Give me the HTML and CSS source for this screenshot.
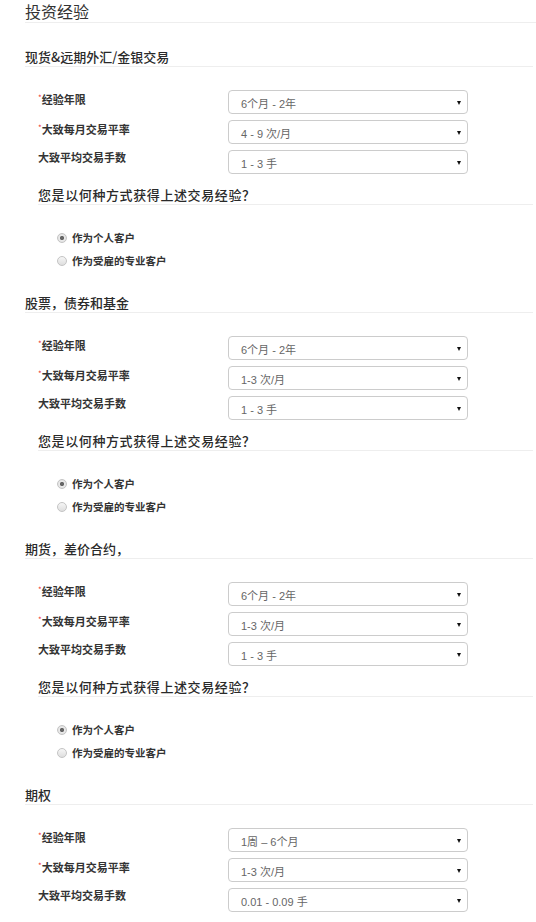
FILE: index.html
```html
<!DOCTYPE html>
<html lang="zh-CN">
<head>
<meta charset="utf-8">
<title>投资经验</title>
<link rel="stylesheet" href="styles.css">
</head>
<body>
<div class="page">
  <h2 class="title">投资经验</h2>

  <section class="group">
    <h3 class="group-title">现货&amp;远期外汇/金银交易</h3>
    <div class="fields">
      <div class="field"><span class="field-label"><span class="req">*</span>经验年限</span><div class="select"><span>6个月 - 2年</span><i class="caret"></i></div></div>
      <div class="field"><span class="field-label"><span class="req">*</span>大致每月交易平率</span><div class="select"><span>4 - 9 次/月</span><i class="caret"></i></div></div>
      <div class="field"><span class="field-label">大致平均交易手数</span><div class="select"><span>1 - 3 手</span><i class="caret"></i></div></div>
    </div>
    <h4 class="question">您是以何种方式获得上述交易经验？</h4>
    <div class="radios">
      <label class="radio"><input type="radio" name="g1" checked><span>作为个人客户</span></label>
      <label class="radio"><input type="radio" name="g1"><span>作为受雇的专业客户</span></label>
    </div>
  </section>

  <section class="group">
    <h3 class="group-title">股票，债券和基金</h3>
    <div class="fields">
      <div class="field"><span class="field-label"><span class="req">*</span>经验年限</span><div class="select"><span>6个月 - 2年</span><i class="caret"></i></div></div>
      <div class="field"><span class="field-label"><span class="req">*</span>大致每月交易平率</span><div class="select"><span>1-3 次/月</span><i class="caret"></i></div></div>
      <div class="field"><span class="field-label">大致平均交易手数</span><div class="select"><span>1 - 3 手</span><i class="caret"></i></div></div>
    </div>
    <h4 class="question">您是以何种方式获得上述交易经验？</h4>
    <div class="radios">
      <label class="radio"><input type="radio" name="g2" checked><span>作为个人客户</span></label>
      <label class="radio"><input type="radio" name="g2"><span>作为受雇的专业客户</span></label>
    </div>
  </section>

  <section class="group">
    <h3 class="group-title">期货，差价合约，</h3>
    <div class="fields">
      <div class="field"><span class="field-label"><span class="req">*</span>经验年限</span><div class="select"><span>6个月 - 2年</span><i class="caret"></i></div></div>
      <div class="field"><span class="field-label"><span class="req">*</span>大致每月交易平率</span><div class="select"><span>1-3 次/月</span><i class="caret"></i></div></div>
      <div class="field"><span class="field-label">大致平均交易手数</span><div class="select"><span>1 - 3 手</span><i class="caret"></i></div></div>
    </div>
    <h4 class="question">您是以何种方式获得上述交易经验？</h4>
    <div class="radios">
      <label class="radio"><input type="radio" name="g3" checked><span>作为个人客户</span></label>
      <label class="radio"><input type="radio" name="g3"><span>作为受雇的专业客户</span></label>
    </div>
  </section>

  <section class="group">
    <h3 class="group-title">期权</h3>
    <div class="fields">
      <div class="field"><span class="field-label"><span class="req">*</span>经验年限</span><div class="select"><span>1周 – 6个月</span><i class="caret"></i></div></div>
      <div class="field"><span class="field-label"><span class="req">*</span>大致每月交易平率</span><div class="select"><span>1-3 次/月</span><i class="caret"></i></div></div>
      <div class="field"><span class="field-label">大致平均交易手数</span><div class="select"><span>0.01 - 0.09 手</span><i class="caret"></i></div></div>
    </div>
  </section>
</div>
</body>
</html>
```

FILE: styles.css
```css
html, body {
  margin: 0;
  padding: 0;
  background: #fff;
}
body {
  font-family: "Noto Sans CJK SC", "Liberation Sans", sans-serif;
  color: #333;
  overflow: hidden;
}
.page {
  padding-left: 25px;
}
.title {
  margin: 0;
  padding-top: 1px;
  font-size: 16px;
  line-height: 21px;
  font-weight: normal;
  border-bottom: 1px solid #eee;
}
.group {
  margin-right: 3px;
  margin-top: 25px;
}
.group + .group {
  margin-top: 22px;
}
.group-title {
  margin: 0;
  font-size: 13px;
  line-height: 18px;
  font-weight: 500;
  color: #2a2a2a;
  border-bottom: 1px solid #eee;
}
.fields {
  margin-top: 23px;
  padding-left: 13px;
  display: flex;
  flex-direction: column;
  gap: 6px;
}
.field {
  display: flex;
  align-items: flex-start;
}
.field-label {
  width: 190px;
  flex: none;
  font-size: 11px;
  line-height: 15px;
  font-weight: bold;
  color: #333;
}
.req {
  color: #e33;
  font-size: 8px;
  font-weight: normal;
  vertical-align: 3px;
}
.select {
  width: 240px;
  height: 24px;
  box-sizing: border-box;
  border: 1px solid #ccc;
  border-radius: 4px;
  display: flex;
  align-items: center;
  justify-content: space-between;
  padding: 1px 6px 0 12px;
  font-family: "Liberation Sans", "Noto Sans CJK SC", sans-serif;
  font-size: 11px;
  color: #666;
  background: #fff;
}
.caret {
  width: 0;
  height: 0;
  border-left: 2.5px solid transparent;
  border-right: 2.5px solid transparent;
  border-top: 4px solid #111;
}
.question {
  margin: 12px 0 0 13px;
  font-size: 13px;
  line-height: 18px;
  font-weight: 500;
  color: #2a2a2a;
  letter-spacing: 0.6px;
  border-bottom: 1px solid #eee;
}
.radios {
  margin-top: 21px;
  padding-left: 32px;
}
.radio {
  display: flex;
  align-items: center;
  gap: 5px;
  height: 23px;
  font-size: 10.5px;
  font-weight: bold;
  color: #333;
}
.radio input {
  appearance: none;
  -webkit-appearance: none;
  margin: 0;
  width: 10px;
  height: 10px;
  border: 1px solid #c4c4c4;
  border-radius: 50%;
  background: linear-gradient(#f6f6f6, #dedede);
  box-sizing: border-box;
}
.radio input:checked {
  background: radial-gradient(circle, #666 0 1.8px, #eaeaea 2.4px, #dcdcdc 100%);
}
```
